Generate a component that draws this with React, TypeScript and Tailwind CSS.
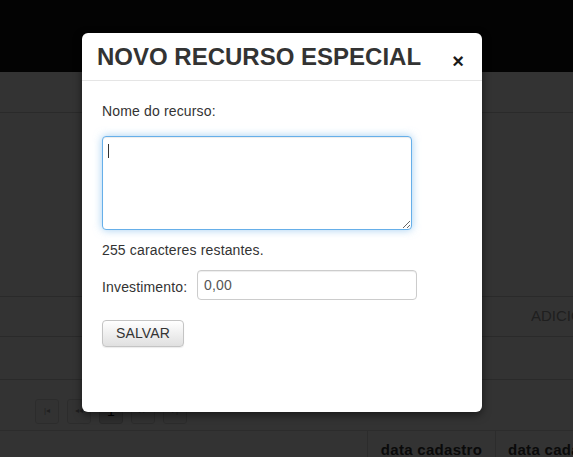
import React from 'react';

const font = { fontFamily: '"Liberation Sans", Arial, sans-serif' };

function Pager() {
  const items = ['|◂', '◂◂', '1', '▸▸', '▸|'];
  return (
    <div className="flex h-[50px] items-center gap-[8px] pl-[35px] pt-[12px]">
      {items.map((it) => (
        <div
          key={it}
          className={
            it === '1'
              ? 'flex h-[25px] w-[24px] items-center justify-center rounded-[3px] border border-[#ccc] bg-[#e6e6e6] text-[14px] text-[#000]'
              : 'flex h-[25px] w-[24px] items-center justify-center rounded-[3px] border border-[#ddd] bg-[#fafafa] text-[8px] text-[#999]'
          }
        >
          {it}
        </div>
      ))}
    </div>
  );
}

function Page() {
  return (
    <div className="h-[457px] w-full overflow-hidden bg-white" style={font}>
      <div className="h-[72px] bg-[#111]" />
      <div className="h-[41px] border-b border-[#d0d0d0] bg-[#fdfdfd]" />
      <div className="h-[184px] border-b border-[#d0d0d0]" />
      <div className="flex h-[40px] items-center justify-end border-b border-[#d0d0d0]">
        <span className="w-[42px] overflow-hidden whitespace-nowrap text-[15px] text-[#999]">ADICIONAR</span>
      </div>
      <div className="h-[43px] border-b border-[#d0d0d0]" />
      <Pager />
      <div className="flex h-[40px] border-t border-[#ddd]">
        <div className="w-[367px]" />
        <div className="flex w-[128px] items-center justify-center border-l border-[#ddd] text-[15px] font-bold tracking-[0.3px] text-[#333]">
          data cadastro
        </div>
        <div className="flex flex-1 items-center overflow-hidden whitespace-nowrap border-l border-[#ddd] pl-[12px] text-[15px] font-bold tracking-[0.3px] text-[#333]">
          data cadastro
        </div>
      </div>
    </div>
  );
}

export default function App() {
  return (
    <div className="relative h-[457px] w-[573px] overflow-hidden">
      <Page />
      <div className="absolute inset-0 bg-black/80" />
      <div
        className="absolute left-[82px] top-[33px] h-[379px] w-[400px] rounded-[6px] bg-white text-[#333] shadow-[0_3px_9px_rgba(0,0,0,0.5)]"
        style={font}
      >
        <div className="flex h-[48px] items-center justify-between border-b border-[#e5e5e5] pl-[15px] pr-[18px]">
          <h3 className="text-[24px] font-bold leading-none text-[#333]">NOVO RECURSO ESPECIAL</h3>
          <span className="mt-[8px] text-[20px] font-bold leading-none text-[#1a1a1a]">×</span>
        </div>
        <div className="px-[20px] pt-[20px] text-[14px] tracking-[0.15px]">
          <div className="h-[20px] leading-[20px]">Nome do recurso:</div>
          <div className="relative mt-[15px] h-[94px] w-[310px]">
            <textarea
              className="block h-[94px] w-[310px] rounded-[4px] border border-[#66afe9] bg-white px-[6px] py-[4px] text-[14px] outline-none shadow-[inset_0_1px_1px_rgba(0,0,0,0.075),0_0_8px_rgba(102,175,233,0.6)]"
              defaultValue=""
            />
            <span className="absolute left-[6px] top-[8px] h-[14px] w-px bg-[#333]" />
          </div>
          <div className="mt-[10px] h-[20px] leading-[20px]">255 caracteres restantes.</div>
          <div className="mt-[10px] flex h-[30px] items-center">
            <span className="w-[95px] pt-[4px]">Investimento:</span>
            <div className="flex h-[30px] w-[220px] items-center rounded-[4px] border border-[#ccc] px-[6px] text-[14px] text-[#555] shadow-[inset_0_1px_1px_rgba(0,0,0,0.075)]">
              0,00
            </div>
          </div>
          <button className="mt-[20px] flex h-[27px] w-[82px] items-center justify-center rounded-[4px] border border-[#c4c4c4] bg-gradient-to-b from-white to-[#e0e0e0] text-[14px] text-[#333] shadow-[0_1px_1px_rgba(0,0,0,0.08)]">
            SALVAR
          </button>
        </div>
      </div>
    </div>
  );
}
